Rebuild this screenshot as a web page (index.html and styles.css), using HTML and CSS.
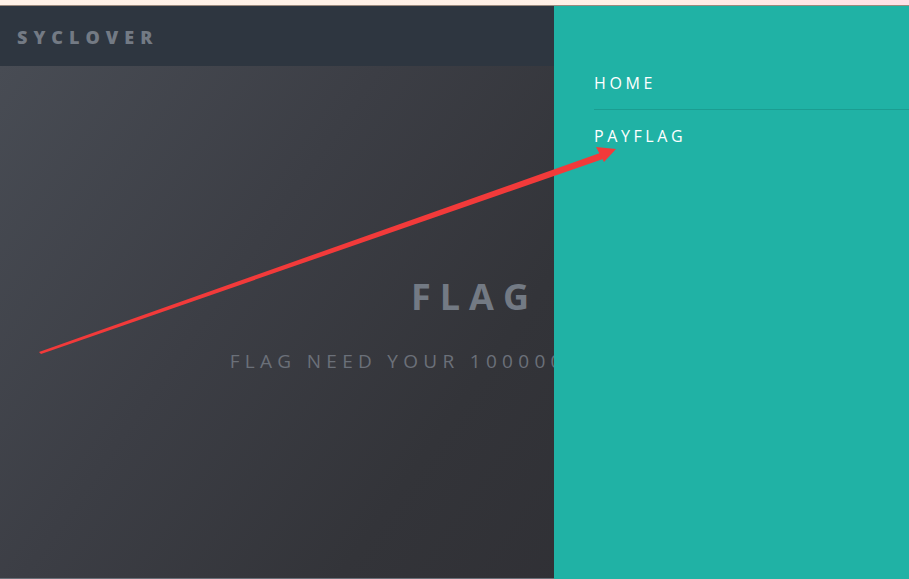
FILE: index.html
```html
<!DOCTYPE html>
<html>
<head>
<meta charset="utf-8">
<link rel="stylesheet" href="styles.css">
</head>
<body>
<div class="topstrip"></div>
<div class="page">
  <header class="header">
    <div class="brand">SYCLOVER</div>
  </header>
  <main class="hero">
    <div class="hero-inner">
      <h1 class="hero-title">FLAG</h1>
      <p class="hero-sub">FLAG NEED YOUR 100000000 MONEY</p>
    </div>
  </main>
  <div class="footline"></div>
  <nav class="menu">
    <ul class="menu-list">
      <li class="menu-item"><a class="menu-link">HOME</a></li>
      <li class="menu-item"><a class="menu-link">PAYFLAG</a></li>
    </ul>
  </nav>
  <svg class="arrow" width="909" height="573" viewBox="0 6 909 573">
    <polygon points="39,352 600,153 603,159 41,354" fill="#f23a3a"/>
    <polygon points="596,147 616,149 604,162" fill="#f23a3a"/>
  </svg>
</div>
</body>
</html>
```
FILE: styles.css
```css
* { box-sizing: border-box; }
html, body { margin: 0; padding: 0; }
body {
  width: 909px;
  height: 579px;
  overflow: hidden;
  background: #2d2c31;
  font-family: "Open Sans", "Noto Sans", sans-serif;
}
.topstrip {
  height: 6px;
  background: linear-gradient(90deg, #fff2e8 0%, #fff0e6 70%, #ffe0e6 100%);
  border-bottom: 1px solid #9c8a7e;
}
.page {
  position: relative;
  height: 573px;
  display: flex;
  flex-direction: column;
}
.header {
  height: 60px;
  background: #2e3640;
  display: flex;
  align-items: center;
  padding-left: 17px;
}
.brand {
  font-weight: 800;
  font-size: 18px;
  letter-spacing: 6px;
  color: #737a84;
  margin-top: 2px;
}
.hero {
  flex: 1;
  background: linear-gradient(125deg, #484c54 0%, #3c3e45 30%, #333439 55%, #2c2b30 100%);
  display: flex;
  align-items: flex-start;
  justify-content: center;
  padding-left: 40px;
}
.hero-inner {
  text-align: center;
  margin-top: 206px;
}
.hero-title {
  margin: 0;
  font-size: 36px;
  font-weight: 700;
  letter-spacing: 9px;
  color: #737a84;
  line-height: 50px;
}
.hero-sub {
  margin: 27px 0 0;
  font-size: 19px;
  font-weight: 400;
  letter-spacing: 5.3px;
  color: #6b7079;
  line-height: 24px;
  white-space: nowrap;
}
.footline {
  height: 1px;
  background: #6a7078;
}
.menu {
  position: absolute;
  top: 0;
  left: 554px;
  right: 0;
  bottom: 0;
  background: #20b2a5;
  padding: 66px 0 0 40px;
}
.menu-list {
  list-style: none;
  margin: 0;
  padding: 0;
}
.menu-item + .menu-item {
  border-top: 1px solid #1b9d91;
}
.menu-link {
  display: block;
  color: #ffffff;
  font-size: 16px;
  letter-spacing: 3.6px;
  line-height: 22px;
  padding: 0 0 15px;
}
.menu-item + .menu-item .menu-link {
  padding-top: 15px;
}
.arrow {
  position: absolute;
  top: 0;
  left: 0;
  pointer-events: none;
}
```
